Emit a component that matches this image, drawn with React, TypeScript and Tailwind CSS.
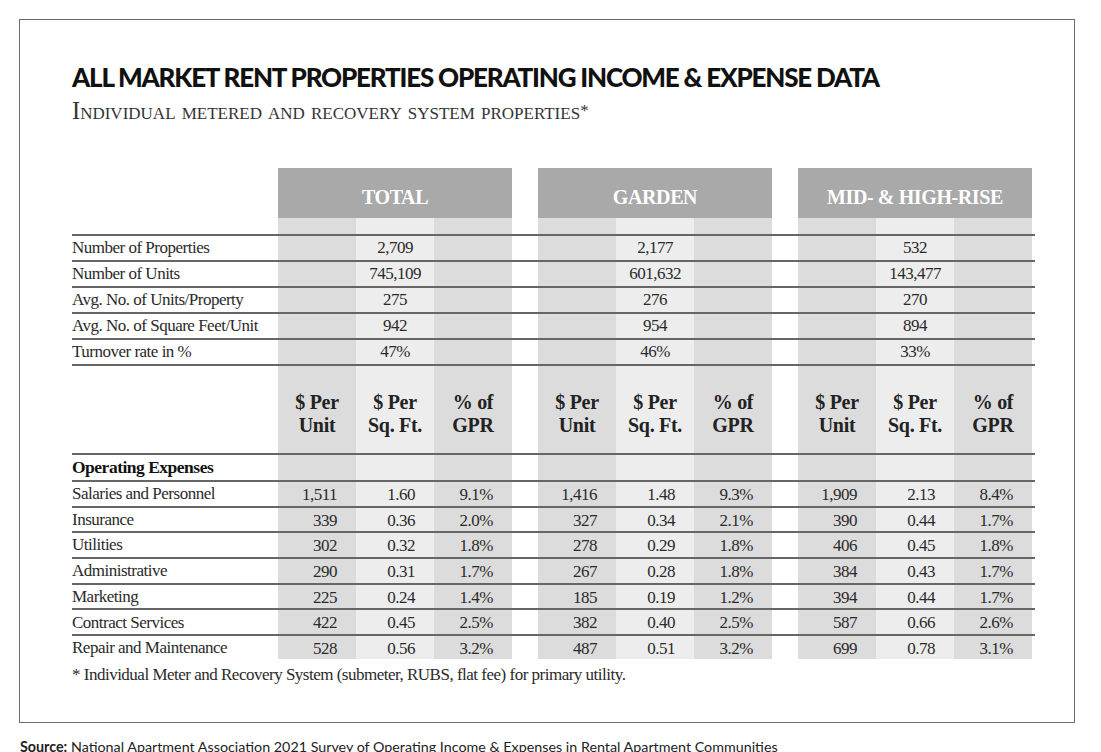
const serif = "font-['Liberation_Serif',serif]";

const groups = ["TOTAL", "GARDEN", "MID- & HIGH-RISE"];

const summary: [string, string, string, string][] = [
  ["Number of Properties", "2,709", "2,177", "532"],
  ["Number of Units", "745,109", "601,632", "143,477"],
  ["Avg. No. of Units/Property", "275", "276", "270"],
  ["Avg. No. of Square Feet/Unit", "942", "954", "894"],
  ["Turnover rate in %", "47%", "46%", "33%"],
];

const expenses: [string, string[][]][] = [
  ["Salaries and Personnel", [["1,511", "1.60", "9.1%"], ["1,416", "1.48", "9.3%"], ["1,909", "2.13", "8.4%"]]],
  ["Insurance", [["339", "0.36", "2.0%"], ["327", "0.34", "2.1%"], ["390", "0.44", "1.7%"]]],
  ["Utilities", [["302", "0.32", "1.8%"], ["278", "0.29", "1.8%"], ["406", "0.45", "1.8%"]]],
  ["Administrative", [["290", "0.31", "1.7%"], ["267", "0.28", "1.8%"], ["384", "0.43", "1.7%"]]],
  ["Marketing", [["225", "0.24", "1.4%"], ["185", "0.19", "1.2%"], ["394", "0.44", "1.7%"]]],
  ["Contract Services", [["422", "0.45", "2.5%"], ["382", "0.40", "2.5%"], ["587", "0.66", "2.6%"]]],
  ["Repair and Maintenance", [["528", "0.56", "3.2%"], ["487", "0.51", "3.2%"], ["699", "0.78", "3.1%"]]],
];

const stripes =
  "w-[234px] shrink-0 bg-[linear-gradient(90deg,#dcdcdc_0_78px,#ededed_78px_156px,#dcdcdc_156px)]";

function Row({
  label,
  children,
  className,
}: {
  label?: React.ReactNode;
  children: (i: number) => React.ReactNode;
  className: string;
}) {
  return (
    <div className={`flex ${className}`}>
      <div className="w-[206px] shrink-0 flex items-center">{label}</div>
      {[0, 1, 2].map((i) => (
        <div key={i} className="flex">
          {i > 0 && <div className="w-[26px] shrink-0" />}
          {children(i)}
        </div>
      ))}
    </div>
  );
}

export default function App() {
  return (
    <div className="w-[1101px] h-[752px] bg-white overflow-hidden text-[#2a2a2a]">
      <div className="mt-[19px] ml-[19px] w-[1056px] h-[704px] border border-[#6b6b6b] pl-[52px]">
        <h1 className="mt-[41px] font-['Lato',sans-serif] font-black text-[26px] leading-[32px] tracking-[-1.2px] text-[#111]">
          ALL MARKET RENT PROPERTIES OPERATING INCOME &amp; EXPENSE DATA
        </h1>
        <p className={`${serif} mt-[5px] text-[24.5px] leading-[26px] [font-variant:small-caps] text-[#333]`}>
          Individual metered and recovery system properties<span className="text-[17px] align-top">*</span>
        </p>

        <div className={`${serif} mt-[44px] w-[963px] text-[17px] tracking-[-0.5px]`}>
          {/* group header bars */}
          <Row className="h-[50px]">
            {(i) => (
              <div className="w-[234px] shrink-0 bg-[#a9a9a9] flex items-center justify-center pt-[8px] text-white font-bold text-[20px] tracking-[-0.4px]">
                {groups[i]}
              </div>
            )}
          </Row>
          <Row className="h-[18px] border-b-2 border-[#666]">{() => <div className={stripes} />}</Row>

          {summary.map((r) => (
            <Row key={r[0]} label={r[0]} className="h-[26px] border-b-2 border-[#666]">
              {(i) => <div className={`${stripes} flex items-center justify-center`}>{r[i + 1]}</div>}
            </Row>
          ))}

          <Row className="h-[89px] border-b-2 border-[#666]">
            {() => (
              <div className={`${stripes} grid grid-cols-3 pt-[25px] text-[20px] leading-[23px] font-bold text-[#222] text-center tracking-[-0.3px]`}>
                <div>
                  $ Per
                  <br />
                  Unit
                </div>
                <div>
                  $ Per
                  <br />
                  Sq. Ft.
                </div>
                <div>
                  % of
                  <br />
                  GPR
                </div>
              </div>
            )}
          </Row>

          <Row
            label={<span className="font-bold text-[17.5px] text-[#111]">Operating Expenses</span>}
            className="h-[27px] border-b-2 border-[#666]"
          >
            {() => <div className={stripes} />}
          </Row>

          {expenses.map(([label, vals], k) => (
            <Row
              key={label}
              label={label}
              className={k < expenses.length - 1 ? "h-[25.7px] border-b-2 border-[#666]" : "h-[23px]"}
            >
              {(i) => (
                <div className={`${stripes} grid grid-cols-3 items-center text-right`}>
                  {vals[i].map((v, j) => (
                    <div key={j} className="pr-[19px]">
                      {v}
                    </div>
                  ))}
                </div>
              )}
            </Row>
          ))}

          <p className="mt-[5px] leading-[22px]">
            * Individual Meter and Recovery System (submeter, RUBS, flat fee) for primary utility.
          </p>
        </div>
      </div>
      <p className="mt-[14px] ml-[20px] font-['Lato',sans-serif] text-[14.3px] leading-[20px] text-[#222]">
        <span className="font-bold">Source:</span> National Apartment Association 2021 Survey of Operating Income &amp;
        Expenses in Rental Apartment Communities
      </p>
    </div>
  );
}
